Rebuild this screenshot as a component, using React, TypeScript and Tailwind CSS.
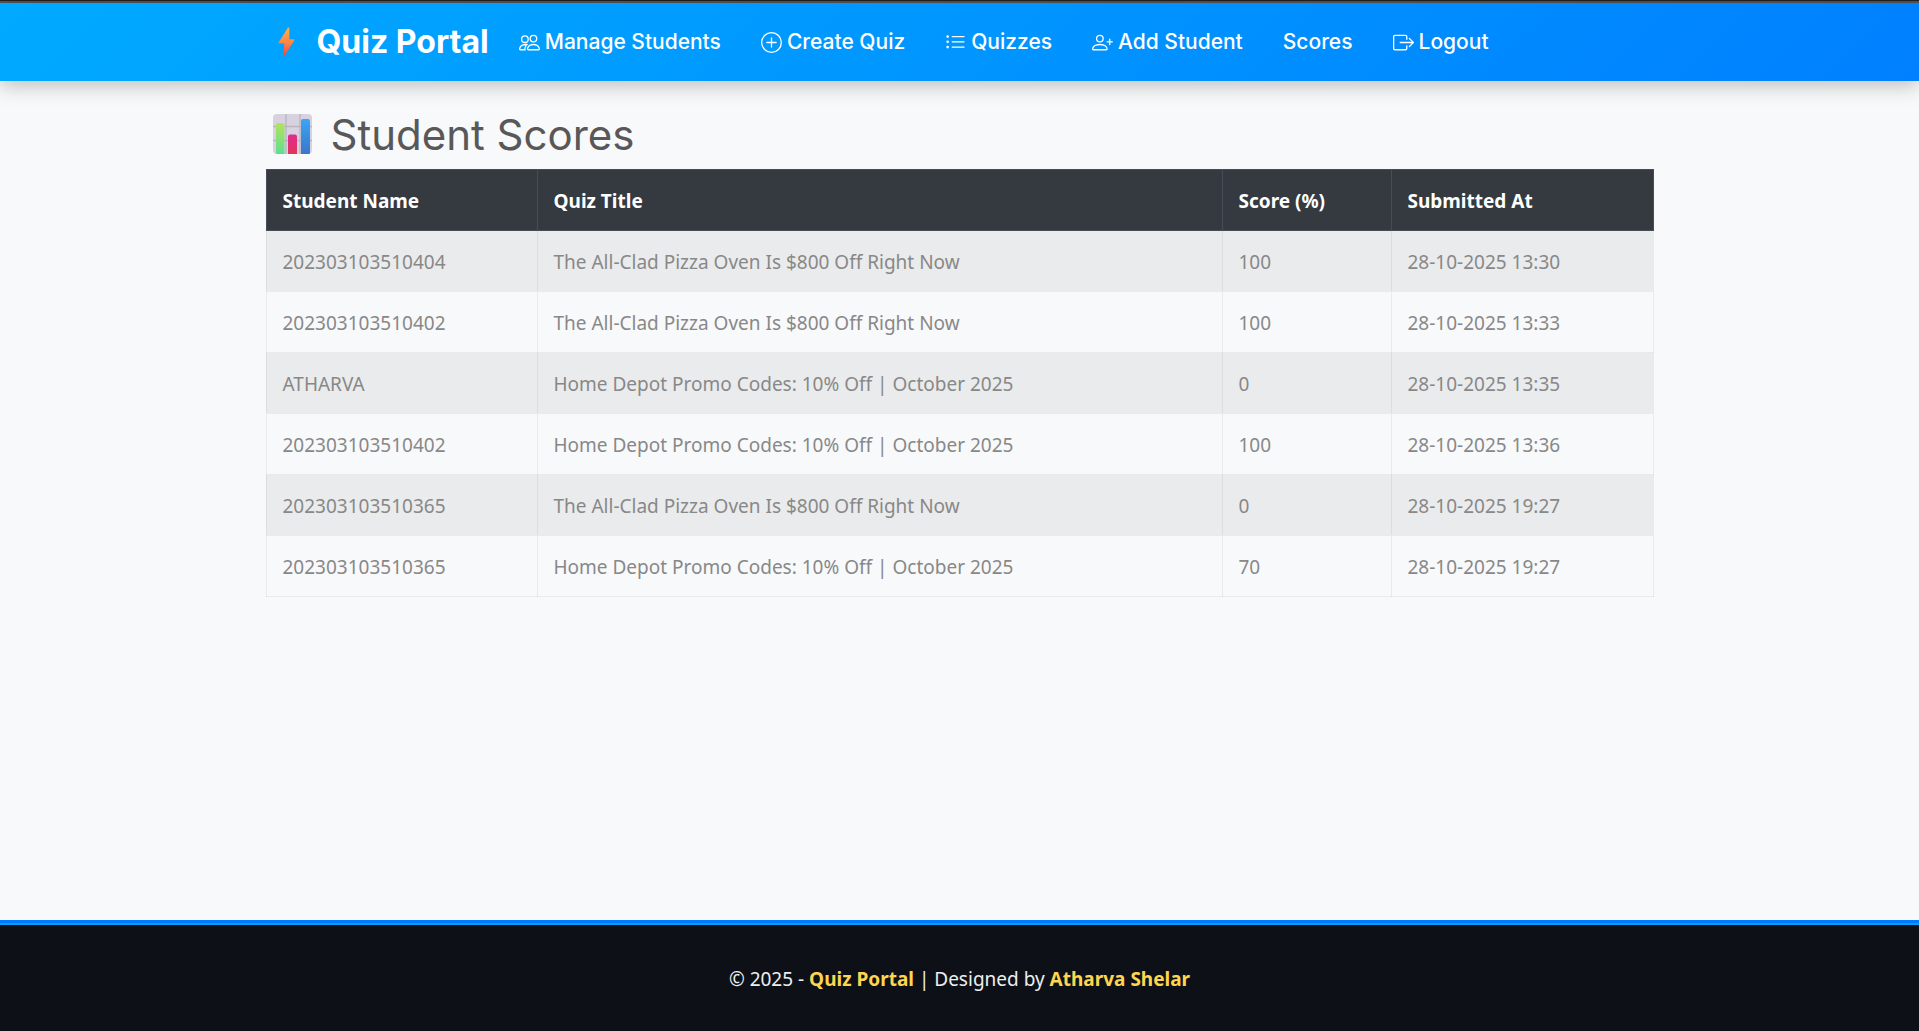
import { BsBoxArrowRight, BsListUl, BsPeople, BsPersonPlus, BsPlusCircle } from "react-icons/bs";
import type { IconType } from "react-icons";

const links: { label: string; icon?: IconType }[] = [
  { label: "Manage Students", icon: BsPeople },
  { label: "Create Quiz", icon: BsPlusCircle },
  { label: "Quizzes", icon: BsListUl },
  { label: "Add Student", icon: BsPersonPlus },
  { label: "Scores" },
  { label: "Logout", icon: BsBoxArrowRight },
];

const pizza = "The All-Clad Pizza Oven Is $800 Off Right Now";
const depot = "Home Depot Promo Codes: 10% Off | October 2025";

const rows = [
  ["202303103510404", pizza, "100", "28-10-2025 13:30"],
  ["202303103510402", pizza, "100", "28-10-2025 13:33"],
  ["ATHARVA", depot, "0", "28-10-2025 13:35"],
  ["202303103510402", depot, "100", "28-10-2025 13:36"],
  ["202303103510365", pizza, "0", "28-10-2025 19:27"],
  ["202303103510365", depot, "70", "28-10-2025 19:27"],
];

const columns = [
  { title: "Student Name", width: "w-[271px]" },
  { title: "Quiz Title", width: "" },
  { title: "Score (%)", width: "w-[169px]" },
  { title: "Submitted At", width: "w-[262px]" },
];

function Bolt() {
  return (
    <svg viewBox="0 0 18 30" className="h-[30px] w-[18px]" aria-hidden="true">
      <defs>
        <linearGradient id="bolt" x1="0" y1="0" x2="0" y2="1">
          <stop offset="0" stopColor="#f9b046" />
          <stop offset="0.5" stopColor="#ff8a47" />
          <stop offset="1" stopColor="#f8473f" />
        </linearGradient>
      </defs>
      <path
        d="M9.700 1 .700 15.200c-.4.6 0 1.200.6 1.200h5L5.600 27.600c0 .9.8 1.100 1.300.4l9.300-14.400c.5-.7.1-1.300-.6-1.300h-4.300l.1-10.800c0-1-1.100-1.300-1.700-.5Z"
        fill="url(#bolt)"
      />
    </svg>
  );
}

function Chart() {
  return (
    <svg viewBox="0 0 40 40" className="size-10" aria-hidden="true">
      <defs>
        <linearGradient id="green" x1="0" y1="0" x2="0" y2="1">
          <stop offset="0" stopColor="#b2e35b" />
          <stop offset="1" stopColor="#5ddf91" />
        </linearGradient>
        <linearGradient id="pink" x1="0" y1="0" x2="0" y2="1">
          <stop offset="0" stopColor="#e22b8c" />
          <stop offset="1" stopColor="#e0365c" />
        </linearGradient>
        <linearGradient id="blue" x1="0" y1="0" x2="0" y2="1">
          <stop offset="0" stopColor="#3ba5f5" />
          <stop offset="1" stopColor="#3a76cb" />
        </linearGradient>
        <clipPath id="card">
          <rect width="39" height="40" rx="4" />
        </clipPath>
      </defs>
      <g clipPath="url(#card)">
        <rect width="39" height="40" fill="#d8d2e0" />
        <path d="M13 0v40M27 0v40M0 12.500h39M0 26.500h39" stroke="#b9b3c2" strokeWidth="1.300" />
        <path d="M3 40V11a2 2 0 0 1 2-2h4.500a2 2 0 0 1 2 2v29Z" fill="url(#green)" />
        <path d="M15 40V22.500a2 2 0 0 1 2-2h5a2 2 0 0 1 2 2V40Z" fill="url(#pink)" />
        <path d="M28 40V7a2 2 0 0 1 2-2h5a2 2 0 0 1 2 2v33Z" fill="url(#blue)" />
      </g>
    </svg>
  );
}

export default function App() {
  return (
    <div className="flex min-h-screen flex-col bg-[#f8f9fb] font-['Noto_Sans','Open_Sans',sans-serif] text-[#888888]">
      <div className="h-[3px] shrink-0 border-t border-[#222222] bg-[#555555]" />
      <nav className="bg-linear-135 from-[#00aaff] to-[#0080ff] font-['Inter',sans-serif] text-white shadow-[0_4px_20px_rgba(0,0,0,0.25)]">
        <div className="mx-auto flex h-[78px] max-w-[1388px] items-center">
          <a href="#" className="mr-[30px] flex items-center text-[32px] leading-10 font-bold whitespace-nowrap">
            <span className="flex w-[51px] pl-3">
              <Bolt />
            </span>
            Quiz Portal
          </a>
          <ul className="flex items-center gap-10 text-[21px] font-medium whitespace-nowrap">
            {links.map(({ label, icon: Icon }) => (
              <li key={label}>
                <a href="#" className="flex items-center gap-[5px]">
                  {Icon && <Icon className="size-[21px]" aria-hidden="true" />}
                  {label}
                </a>
              </li>
            ))}
          </ul>
        </div>
      </nav>

      <main className="mx-auto w-full max-w-[1388px] flex-1 pt-7">
        <h1 className="mb-[10px] flex h-[50px] items-center pl-[7px] font-['Inter',sans-serif] text-[42px] text-[#585858]">
          <span className="mr-[18px]">
            <Chart />
          </span>
          Student Scores
        </h1>
        <table className="w-full table-fixed border-collapse text-left text-[19px] leading-7">
          <thead>
            <tr className="bg-[#343a40] text-white">
              {columns.map(({ title, width }) => (
                <th key={title} scope="col" className={`${width} border border-[#454d55] px-4 pt-[17px] pb-[15px] font-bold`}>
                  {title}
                </th>
              ))}
            </tr>
          </thead>
          <tbody>
            {rows.map((row, i) => (
              <tr key={i} className="group odd:bg-[#eaebec]">
                {row.map((cell, j) => (
                  <td key={j} className="border border-black/6 px-4 pt-[17px] pb-[15px] group-odd:border-b-[#eaebec]">
                    {cell}
                  </td>
                ))}
              </tr>
            ))}
          </tbody>
        </table>
      </main>

      <footer className="bg-[#0d1117] text-center text-[19px] leading-7 text-[#eeeeee]">
        <div className="h-[5px] border-t-3 border-[#007bff] bg-[#00a2ff]" />
        <p className="pt-10 pb-[38px]">
          © 2025 - <strong className="text-[#ffd54f]">Quiz Portal</strong> | Designed by{" "}
          <strong className="text-[#ffd54f]">Atharva Shelar</strong>
        </p>
      </footer>
    </div>
  );
}
